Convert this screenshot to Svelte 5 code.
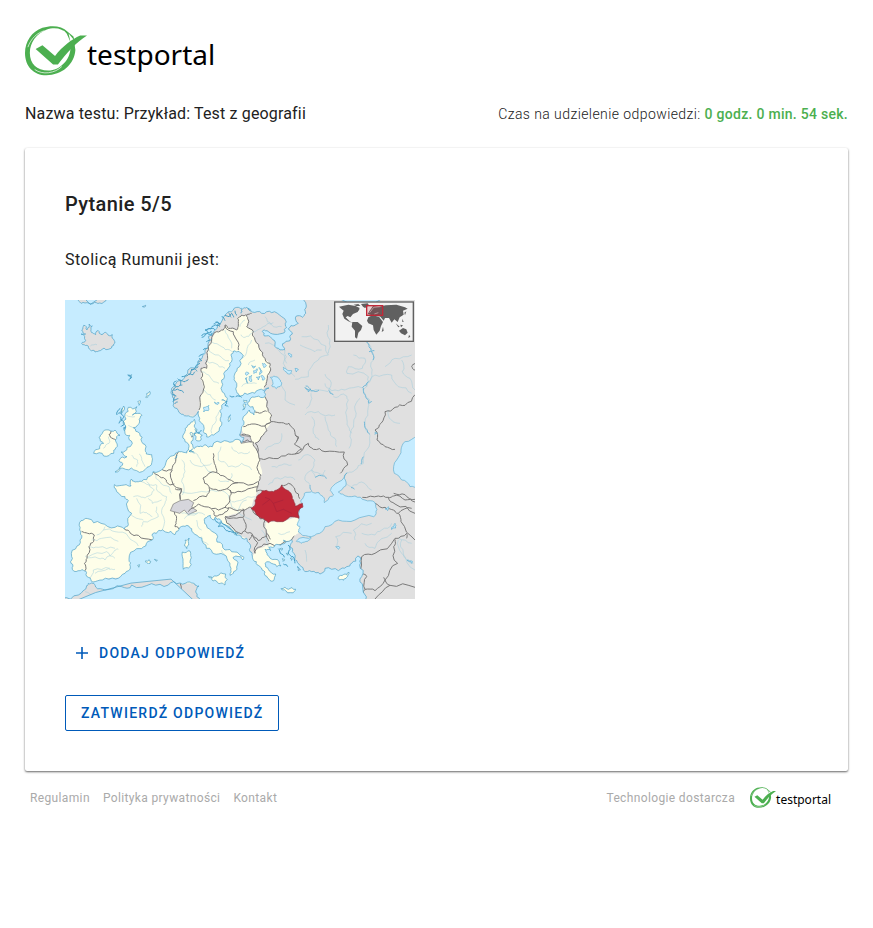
<script>
  // Map coordinates: 1050 x 897 units, origin in the top left corner.
  const parse = (s) => s.trim().split(/\s+/).map((p) => p.split(',').map(Number));

  // Adds small, repeatable irregularities so that coasts and rivers look natural.
  function rough(s, amount = 0.14, depth = 2, closed = true) {
    let pts = parse(s);
    if (closed) pts.push(pts[0]);
    for (let d = 0; d < depth; d++) {
      const next = [pts[0]];
      for (let i = 1; i < pts.length; i++) {
        const [ax, ay] = pts[i - 1];
        const [bx, by] = pts[i];
        const noise = Math.sin(ax * 12.9 + ay * 78.2 + bx * 37.7 + by * 11.3) * amount;
        next.push([(ax + bx) / 2 - (by - ay) * noise, (ay + by) / 2 + (bx - ax) * noise]);
        next.push(pts[i]);
      }
      pts = next;
    }
    return 'M' + pts.map(([x, y]) => `${x.toFixed(1)} ${y.toFixed(1)}`).join('L') + (closed ? 'Z' : '');
  }
  const line = (s) => rough(s, 0.16, 2, false);

  const mainland = rough(
    '505,30 520,22 532,27 545,22 562,36 590,40 620,38 650,50 664,66 665,82 658,98 630,103 606,92 592,94 598,108 620,115 630,132 645,150 658,150 653,131 675,122 682,102 670,86 690,76 700,70 694,48 712,52 722,40 724,18 718,-20 1070,-20 1070,920 890,920 893,860 890,830 884,795 886,772 876,770 860,790 845,800 820,812 780,805 765,822 740,815 715,810 700,790 688,780 682,755 675,738 682,722 670,724 652,732 630,735 612,742 617,752 600,748 606,764 630,778 648,798 625,792 600,790 610,808 632,822 626,842 608,834 600,816 585,800 574,785 562,768 555,755 553,730 545,715 522,705 500,692 480,675 465,658 450,652 446,660 436,646 420,654 424,674 448,698 456,726 480,750 508,756 535,770 534,780 516,769 504,774 517,795 506,815 495,826 498,805 486,776 460,762 440,752 415,730 396,706 380,686 360,679 342,688 330,704 302,696 282,691 262,702 262,720 242,738 215,746 192,778 196,800 180,820 152,837 112,840 84,846 70,832 62,813 46,812 22,808 18,790 20,770 36,738 50,714 44,690 48,662 68,656 108,670 150,682 178,687 190,674 200,640 190,602 180,590 152,566 148,554 178,555 198,558 198,538 210,546 230,544 256,528 264,515 296,504 312,474 332,459 350,455 365,459 372,440 360,425 356,402 360,386 378,366 388,358 389,374 396,388 384,410 378,430 388,446 402,440 420,434 442,440 478,422 510,419 530,428 536,412 524,404 530,380 535,350 553,330 567,345 571,333 550,316 554,300 574,290 600,290 598,278 612,264 580,270 555,280 526,288 515,275 510,243 508,226 524,200 535,166 522,154 506,153 498,165 494,190 480,214 470,240 468,265 480,286 486,300 470,316 468,350 470,375 446,405 425,411 415,395 402,362 400,334 376,350 354,343 340,332 326,310 322,285 326,260 342,242 360,228 388,204 402,180 420,150 430,110 458,72 480,45',
    0.22, 2
  );
  const islands = [
    '56,76 66,90 72,72 82,78 80,98 92,104 100,92 108,104 118,98 130,106 142,104 148,122 146,136 130,148 106,152 90,156 76,150 66,136 50,130 62,122 48,102 62,102 50,90',
    '190,322 216,320 202,345 231,346 224,363 205,383 224,400 230,425 241,447 244,462 260,464 262,480 246,502 215,512 182,508 150,516 172,496 162,482 186,470 168,456 186,442 202,430 194,406 180,400 174,370 180,342',
    '86,460 104,446 116,430 102,412 112,400 132,390 150,390 165,406 151,420 152,444 146,460 116,468',
    '-10,897 40,885 65,857 70,850 82,850 92,861 120,870 170,860 200,855 260,851 310,855 345,849 376,846 390,855 402,858 392,876 406,900 406,920 -10,920',
    '430,830 455,828 482,822 480,855 462,851 444,843',
    '352,756 375,753 376,780 370,804 355,808 354,785',
    '360,720 372,714 371,735 366,746 359,738',
    '648,866 670,868 692,868 690,872 662,872',
    '820,832 835,824 852,817 845,832 835,841 824,840',
    '240,784 252,779 258,786 250,792', '268,778 277,780 274,784', '218,796 224,794 222,802',
    '30,-10 40,2 60,9 84,11 104,9 124,-4', '386,402 400,396 412,406 408,420 392,418', '380,408 376,398 384,400',
    '490,352 497,345 496,358 491,365', '534,314 543,312 541,322 533,330', '536,300 546,302 540,308',
    '188,225 200,224 196,236', '218,306 228,304 222,316', '160,340 176,318 170,340', '166,350 172,360 162,370',
    '242,292 254,274 248,292', '232,20 242,16 238,21', '644,746 654,746 650,751', '664,760 672,758 669,766',
    '676,774 682,776 679,781', '652,776 660,780 654,784', '696,800 706,810 700,812', '656,720 662,723 657,726'
  ].map((s) => rough(s, 0.24, 2));

  const eu = [
    '402,330 405,300 415,270 408,235 408,205 425,205 428,175 430,140 440,120 455,95 475,90 480,75 490,85 515,90 520,75 518,55 530,45 545,45 550,60 545,80 565,95 570,120 585,150 595,170 615,190 617,210 605,245 598,262 585,278 530,296 510,310 500,365 470,410 430,425 398,385',
    '600,285 605,320 620,345 618,365 595,405 570,430 560,425 558,410 535,400 522,380 522,350 530,300',
    '526,424 565,426 575,450 585,480 592,520 580,545 575,580 560,620 535,628 520,640 480,650 495,682 547,716 525,720 550,770 500,890 400,815 300,820 80,849 0,830 0,640 120,560 140,530 300,450 340,350 395,350 420,410 500,405',
    '602,668 660,662 700,645 708,695 682,712 674,735 672,770 690,880 590,860 554,790 574,750 615,732 602,685',
    '0,380 270,260 280,530 80,530', '340,700 485,810 485,860 340,850', '200,770 290,770 290,808 200,808', '810,810 860,810 860,850 810,850'
  ].map((s) => rough(s, 0.06, 2));

  const greys = [
    '316,632 325,612 345,602 370,598 386,608 380,622 396,632 370,644 358,630 344,640',
    '522,404 555,410 560,424 528,430'
  ];
  const romania = rough('558,625 570,615 575,590 592,572 615,575 635,570 650,555 665,570 680,585 687,605 690,618 700,615 712,610 713,622 702,630 702,655 675,650 645,665 610,668 600,660 592,655 575,645', 0.12);

  const seas = [
    '704,628 711,612 708,600 718,580 740,575 762,578 774,590 778,608 790,598 806,585 796,572 802,560 822,545 846,518 838,535 842,558 820,576 832,582 870,588 900,600 930,608 936,628 926,650 870,660 820,660 780,680 764,700 730,709 700,696 705,680 696,675 702,655',
    '1060,412 1020,425 1008,450 995,480 988,520 1010,540 1035,560 1060,565',
    '694,724 706,714 738,712 728,724 708,730'
  ].map((s) => rough(s, 0.14, 2));
  const lakes = [
    '616,232 626,228 646,240 648,256 634,266 620,258', '655,202 664,208 680,212 676,222 660,214', '416,322 432,316 430,332 416,336',
    '720,262 738,268 730,276', '980,682 990,670 992,684 978,688', '1026,780 1042,784 1040,790', '812,740 824,742 820,748',
    '670,160 680,164 678,172', '690,205 700,210 694,216', '552,230 560,226 560,244 553,242', '566,212 576,206 574,218 566,220',
    '582,202 590,212 584,224', '540,236 546,232 548,250', '574,232 586,228 580,240', '592,190 604,196 596,202', '560,196 572,198 564,204',
    '542,218 552,220 544,226', '590,226 600,236 592,240', '448,306 462,308 456,314', '960,626 970,620 968,632', '930,396 937,400 930,403'
  ].map((s) => rough(s, 0.2, 2));

  const borders = [
    '402,330 405,300 415,270 408,235 408,205 425,205 428,175 430,140 440,120 455,95 475,90 480,75 490,85 515,90 520,75 518,55 530,45 545,45 550,60 545,80 565,95 570,120 585,150 595,170 615,190 617,210 605,245 598,262',
    '480,78 505,95 515,120 520,150', '545,45 560,40', '600,290 605,320 620,345 618,365', '567,332 590,338 605,334', '535,380 560,372 600,378 618,365',
    '618,365 600,378 606,392 595,405 570,430', '558,410 530,404', '528,425 565,426 575,450 585,480 578,510 588,525 580,545 575,575 592,572',
    '618,365 650,368 672,370 690,398 700,412 688,432 710,448 690,462 650,468 600,478 582,474', '690,462 730,430 745,448 780,455 838,456 848,495 826,520',
    '570,430 578,458', '650,555 670,550 690,572 704,596', '445,460 448,490 455,518 480,530 520,548 578,545', '414,534 455,518', '414,534 432,560 460,572 486,566 520,548',
    '486,566 498,578 540,572 580,560', '432,562 424,590 385,602', '370,635 400,612 440,626 480,622 494,594 496,570', '480,622 498,624 535,632 560,622', '440,628 450,648 475,642 490,622',
    '480,650 495,655 535,652 534,626', '480,652 500,680 530,702 540,692 535,655', '558,625 575,645 600,660 604,700 616,718', '540,692 560,700 580,722 604,706', '553,720 560,705 578,728 570,760',
    '570,760 580,742 615,730 674,724 688,708', '604,700 612,724', '645,665 675,650 702,650',
    '264,514 284,530 304,540 314,554 328,552', '290,508 320,510 332,484 340,456', '322,510 324,552 350,566 346,600', '330,566 350,570 346,598', '328,636 334,662 330,680 346,690',
    '178,687 196,700 220,706 262,720', '50,694 68,700 88,705 86,724 72,740 66,775 58,790 60,812', '384,408 378,410', '356,450 365,456', '130,880 150,900', '346,850 350,900',
    '138,392 132,404 144,416 154,420 163,408',
    '890,770 930,760 990,715 1025,700 1025,715', '990,718 986,740 998,790 960,840 930,872 900,868', '956,832 975,856 1050,862', '890,770 892,820 905,830 900,868 898,897', '930,897 975,856', '1000,640 1008,665 1050,720',
    '892,592 940,588 970,592 986,588 1020,600 1050,606', '930,610 960,622 985,630 1000,640 1040,625', '970,592 990,612 1050,640', '986,580 1020,584 1050,598',
    '1050,284 1020,316 990,322 960,335 948,370 930,390 936,420 960,440 990,448', '1050,190 1040,200 1050,210', '690,405 702,412 696,422', '480,650 520,640 534,628'
  ].map(line);

  const rivers = [
    '560,100 540,112 528,104', '440,125 470,140 495,150 512,160', '430,145 460,165 492,182', '420,180 450,190 480,205', '410,215 436,232 462,250', '415,268 436,284 452,300', '462,335 450,370 440,400', '480,90 495,120 500,145',
    '560,120 545,155 532,175', '570,180 550,195', '530,260 560,250 575,250', '600,50 620,75 650,80', '540,60 525,80', '600,130 640,150 665,190', '560,95 595,80 625,68',
    '648,255 660,300 690,315', '660,150 655,190 690,230', '710,110 760,120 790,165 760,180 730,230 690,238', '705,135 750,155 770,150', '790,75 795,120 790,160', '865,165 900,175 892,205 850,200 846,220 910,230 905,260',
    '905,125 920,155 925,180 920,220 910,245 893,268 900,290 915,305 910,320', '780,250 800,272 840,270 893,264', '780,222 795,240 795,275 805,285', '722,265 740,275 790,275', '738,280 735,310 724,325', '910,250 930,225 980,225 1000,260 1040,280', '1010,180 1012,215 1035,235 1050,270',
    '805,290 835,282 850,300 845,350 850,380 860,400', '885,295 870,330 866,370 855,410 852,445', '720,345 760,335 790,345 810,345', '780,350 790,390 810,415 815,440', '740,350 745,400 762,420', '910,320 900,370 915,405 905,450 895,490 870,510 848,520', '970,330 980,360 1005,370', '960,200 990,175 1040,165',
    '735,555 720,530 740,510 750,480 720,465 700,480', '750,530 740,510 775,525 780,510', '838,550 860,560 890,546 920,570', '890,700 930,705 950,690 980,670', '815,740 812,710 860,700', '720,750 725,785', '870,720 865,690 920,670', '900,730 930,745 980,700', '1000,715 1040,730',
    '1000,720 1010,760 1050,810', '1045,790 1015,760 1010,720', '620,500 650,495 680,495', '600,450 640,430 650,400', '610,555 630,535 660,530 690,540',
    '468,440 460,480 490,500 530,490 560,510', '500,440 520,460 555,455', '445,520 420,500 400,470 380,455', '460,540 490,545 500,520', '350,480 360,515 350,545 352,585', '340,565 380,580 440,570 490,585 500,620 560,660', '375,480 410,500 440,490', '500,605 530,600 570,590', '520,630 545,600',
    '205,590 230,592 245,590 268,570 245,545', '215,595 225,640 245,638 262,650', '190,640 215,655 235,660', '230,680 235,665 280,650 275,620', '292,690 290,640 300,610 305,590', '230,545 260,555 275,555 280,575 305,590', '268,520 285,545 312,560 320,580', '250,595 262,610 290,600',
    '115,690 150,695 190,710 220,738', '95,705 120,680', '60,768 100,775 120,780 150,750 160,748', '70,742 100,742 150,745', '90,820 130,806 150,808', '80,720 110,715 160,724', '70,770 125,755 150,775', '75,835 85,810 135,805',
    '350,640 380,640 420,645', '358,656 398,640', '395,660 410,690', '410,710 430,735', '470,750 480,765', '184,345 210,350', '205,385 190,375', '240,500 230,480 222,462', '200,465 218,480 215,500', '115,445 132,430 130,410', '76,138 96,134', '590,690 610,740', '610,740 625,760', '640,700 675,695', '590,640 610,620 630,625 640,660', '625,650 650,620 675,630', '60,875 90,890'
  ].map(line);

  // The widest reaches of the large rivers and reservoirs.
  const wideRivers = [
    '905,125 912,140 920,155 924,180', '912,155 928,152', '910,245 893,262 896,280 905,296 912,310 920,304', '722,258 738,272 762,270', '790,270 805,284', '898,365 905,388 914,402', '750,532 776,528 784,536', '888,492 895,470', '858,562 868,568', '735,555 740,572'
  ].map(line);

  const fjords = [
    '324,270 350,272 356,278', '325,252 340,260 352,255', '326,300 340,296', '328,312 338,306', '345,240 360,245 370,238', '322,284 334,288', '370,222 384,224 390,215', '390,200 405,190', '402,170 415,160', '415,150 428,145', '424,125 440,118', '410,108 425,100 440,94', '424,92 440,84 450,90', '440,80 462,76', '452,66 468,72', '470,50 480,62', '490,38 498,52', '510,32 516,46', '530,28 528,40', '548,24 556,34', '334,242 326,250 332,262 322,275 330,290 324,305', '350,230 370,224 380,210 400,200', '410,112 430,98 420,90 442,84',
    '480,46 492,50 500,40 506,52', '446,72 458,66 464,80', '398,186 410,182 404,174', '378,208 390,206 396,214', '338,236 348,246 344,256', '430,104 440,106 436,96',
    '172,325 168,340 176,350 168,360 178,370 168,380', '166,325 156,345', '178,392 182,380 174,384', '450,656 456,666 466,670 460,680 475,680 484,692 500,696 515,706', '465,665 480,674 500,688 520,700', '670,735 676,748 670,760 684,770 690,790', '640,746 646,760 658,772', '655,792 668,800', '390,388 402,400 410,392', '470,300 486,304 480,316 490,320', '494,288 508,290', '512,290 530,292', '382,446 372,454 388,458', '336,466 330,476', '190,225 200,232 192,242'
  ].map(line);

  const footerLinks = ['Regulamin', 'Polityka prywatności', 'Kontakt'];
  const seconds = 54;
</script>

{#snippet mark()}
  <svg class="mark" viewBox="0 0 64 52" aria-hidden="true">
    <path
      fill="#4caf50"
      fill-rule="evenodd"
      d="M50 10 44 5C38-1 28-2 18 1 7 5 0 15 0 27 0 41 9 50 22 50 38 50 51 39 52 24L51 17 47 21C47 34 36 45 24 45 12 45 5 38 5 27 5 16 12 7 22 3 31 0 39 2 43 7L47 16 45 7 51 14Z"
    />
    <path fill="#4caf50" d="M11 23 18 19 31 30C39 20 48 13 57 9L64 9C53 16 43 27 34 39L29 39Z" />
    <path fill="none" stroke="#fff" stroke-width="0.7" d="M3 21C6 12 13 6 20 4M10 44C18 50 31 48 38 41M40 4 44 11" />
  </svg>
{/snippet}

<div class="page">
  <header>
    <a class="logo" href="#start" aria-label="testportal">{@render mark()}<span>testportal</span></a>
    <div class="info">
      <h1>Nazwa testu: Przykład: Test z geografii</h1>
      <p class="timer">Czas na udzielenie odpowiedzi: <strong>0 godz. 0 min. {seconds} sek.</strong></p>
    </div>
  </header>

  <main>
    <h2>Pytanie 5/5</h2>
    <p class="question">Stolicą Rumunii jest:</p>

    <svg class="map" viewBox="0 0 1050 897" role="img" aria-label="Mapa Europy">
      <defs>
        <clipPath id="land">
          <path d={mainland} />
          {#each islands as d}<path {d} />{/each}
        </clipPath>
      </defs>
      <rect width="1050" height="897" fill="#c6ecff" />
      <g clip-path="url(#land)">
        <rect width="1050" height="897" fill="#e0e0e0" />
        {#each eu as d}<path {d} fill="#fefee9" />{/each}
        {#each greys as points}<polygon {points} fill="#d6d6dc" stroke="#777" stroke-width="2" />{/each}
        <g class="rivers">{#each rivers as d}<path {d} />{/each}</g>
        <g class="wide">{#each wideRivers as d}<path {d} />{/each}</g>
        <g class="borders">{#each borders as d}<path {d} />{/each}</g>
      </g>
      <g class="coast">
        <path d={mainland} />
        {#each islands as d}<path {d} />{/each}
      </g>
      <g class="water">
        {#each seas as d}<path {d} />{/each}
        {#each lakes as d}<path {d} />{/each}
      </g>
      <g class="fjords">{#each fjords as d}<path {d} />{/each}</g>
      <path d={romania} fill="#c12838" stroke="#8f3440" stroke-width="2" />
      <path fill="none" stroke="#a7213a" stroke-width="2" d="M592 615 615 598 625 610 635 635 655 628 680 640M615 598 600 592M625 610 655 600" />

      <rect x="809" y="6" width="236" height="118" fill="#f2f2f2" stroke="#606060" stroke-width="4" />
      <g fill="#606060">
        <path d="M822 20 850 14 872 18 884 24 878 36 864 42 856 52 848 48 842 52 854 64 864 70 850 64 838 56 832 42 836 32 826 24Z" />
        <path d="M888 12 908 10 912 16 900 24 894 20ZM866 14 880 12 886 18 874 18ZM874 26 884 28 878 34Z" />
        <path d="M862 66 878 66 892 78 888 90 880 98 876 116 870 112 870 92 860 80Z" />
        <path d="M910 52 922 46 942 50 954 66 948 78 944 92 934 104 926 90 924 76 910 70 906 62Z" />
        <path d="M908 42 914 32 924 18 942 20 962 16 994 14 1020 22 1028 26 1014 32 1016 44 1004 52 998 66 988 58 980 68 972 54 960 54 956 62 946 50 932 46 920 46Z" />
        <path d="M1002 92 1014 84 1024 88 1028 98 1020 106 1008 100ZM1018 38 1024 34 1020 46ZM992 70 1004 80 1000 82ZM1006 74 1014 76 1008 82ZM954 80 956 92 950 96ZM1032 104 1036 110 1030 114ZM1012 56 1016 66 1012 66Z" />
      </g>
      <path d="M914 38 926 22 946 20M928 42 940 38" stroke="#fff" stroke-width="3" fill="none" opacity=".5" />
      <rect x="905" y="17" width="48" height="29" fill="#c12838" fill-opacity=".18" stroke="#c12838" stroke-width="4" />
    </svg>

    <div class="actions">
      <button class="add" type="button">
        <svg viewBox="0 0 12 12" aria-hidden="true"><path d="M6 0V12M0 6H12" /></svg>DODAJ ODPOWIEDŹ
      </button>
      <button class="submit" type="button">ZATWIERDŹ ODPOWIEDŹ</button>
    </div>
  </main>

  <footer>
    <nav>
      {#each footerLinks as label}<a href="#info">{label}</a>{/each}
    </nav>
    <div class="provider">
      <span>Technologie dostarcza</span>
      <a class="logo small" href="#start" aria-label="testportal">{@render mark()}<span>testportal</span></a>
    </div>
  </footer>
</div>

<style>
  :global(body) {
    margin: 0;
    background: #fff;
  }
  .page {
    padding: 24px 25px;
    font-family: Roboto, "Noto Sans", sans-serif;
    font-size: 16px;
    color: #212121;
    letter-spacing: 0.01em;
  }
  h1, h2, p {
    margin: 0;
    font-weight: 400;
  }
  a {
    color: inherit;
    text-decoration: none;
  }
  .logo {
    display: inline-flex;
    align-items: center;
    font-family: "Noto Sans", "Open Sans", sans-serif;
    font-size: 28px;
    line-height: 52px;
    letter-spacing: normal;
    color: #000;
  }
  .logo span {
    padding-top: 4px;
  }
  .mark {
    width: 62px;
    height: 52px;
    flex: none;
    overflow: visible;
  }
  .info {
    display: flex;
    justify-content: space-between;
    align-items: center;
    flex-wrap: wrap;
    margin: 20px 0 22px;
    line-height: 24px;
  }
  h1 {
    font-size: 16px;
  }
  .timer {
    font-size: 14px;
    font-weight: 300;
    letter-spacing: 0.03em;
  }
  .timer strong {
    font-weight: 500;
    letter-spacing: 0.02em;
    color: #4caf50;
  }
  main {
    padding: 40px;
    border-radius: 2px;
    box-shadow: 0 1px 2px rgba(0, 0, 0, 0.5), 0 1px 3px rgba(0, 0, 0, 0.15);
  }
  h2 {
    font-size: 20px;
    font-weight: 500;
    line-height: 32px;
    letter-spacing: 0.02em;
  }
  .question {
    margin: 28px 0;
    line-height: 24px;
    letter-spacing: 0.03em;
  }
  .map {
    display: block;
    width: 350px;
    max-width: 100%;
  }
  .rivers path {
    fill: none;
    stroke: #9bcbdc;
    stroke-width: 2;
    opacity: 0.7;
  }
  .wide path {
    fill: none;
    stroke: #72b8d8;
    stroke-width: 3;
  }
  .borders path {
    fill: none;
    stroke: #7a7a7a;
    stroke-width: 3;
  }
  .coast path {
    fill: none;
    stroke: #479fc6;
    stroke-width: 2;
  }
  .water path {
    fill: #c6ecff;
    stroke: #5fadd0;
    stroke-width: 2;
  }
  .fjords path {
    fill: none;
    stroke: #459dc4;
    stroke-width: 3;
  }
  .actions {
    display: flex;
    flex-direction: column;
    align-items: flex-start;
    gap: 24px;
    margin-top: 36px;
  }
  button {
    height: 36px;
    padding: 0 15px;
    border: 1px solid transparent;
    border-radius: 2px;
    background: none;
    font: 500 14px Roboto, "Noto Sans", sans-serif;
    letter-spacing: 0.09em;
    color: #005ab9;
    cursor: pointer;
  }
  .submit {
    border-color: #005ab9;
  }
  .add {
    display: flex;
    align-items: center;
    gap: 11px;
    padding: 0 10px;
  }
  .add svg {
    width: 12px;
    height: 12px;
    fill: none;
    stroke: currentColor;
    stroke-width: 1.6;
  }
  footer {
    display: flex;
    justify-content: space-between;
    align-items: center;
    flex-wrap: wrap;
    padding: 14px 17px 0 5px;
    font-size: 12px;
    line-height: 24px;
    letter-spacing: 0.03em;
    color: #aaa;
  }
  nav {
    display: flex;
    gap: 13px;
  }
  .provider {
    display: flex;
    align-items: center;
    gap: 15px;
  }
  .small {
    font-size: 12px;
    line-height: 22px;
  }
  .small .mark {
    width: 26px;
    height: 22px;
  }
</style>
